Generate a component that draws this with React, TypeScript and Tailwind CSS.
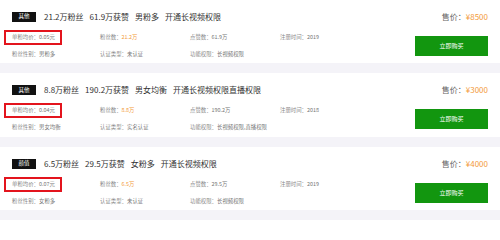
import React from "react";

interface Account {
  tag: string;
  title: string[];
  unitPrice: string;
  fans: string;
  likes: string;
  year: string;
  gender: string;
  auth: string;
  perms: string;
  price: string;
}

const accounts: Account[] = [
  {
    tag: "其他",
    title: ["21.2万粉丝", "61.9万获赞", "男粉多", "开通长视频权限"],
    unitPrice: "0.05元",
    fans: "21.2万",
    likes: "61.9万",
    year: "2019",
    gender: "男粉多",
    auth: "未认证",
    perms: "长视频权限",
    price: "¥8500",
  },
  {
    tag: "其他",
    title: ["8.8万粉丝", "190.2万获赞", "男女均衡", "开通长视频权限直播权限"],
    unitPrice: "0.04元",
    fans: "8.8万",
    likes: "190.2万",
    year: "2018",
    gender: "男女均衡",
    auth: "实名认证",
    perms: "长视频权限,直播权限",
    price: "¥3000",
  },
  {
    tag: "颜值",
    title: ["6.5万粉丝", "29.5万获赞", "女粉多", "开通长视频权限"],
    unitPrice: "0.07元",
    fans: "6.5万",
    likes: "29.5万",
    year: "2019",
    gender: "女粉多",
    auth: "未认证",
    perms: "长视频权限",
    price: "¥4000",
  },
];

function Field({ label, value, orange }: { label: string; value: string; orange?: boolean }) {
  return (
    <div className="whitespace-nowrap text-[#888]">
      {label}：<span className={orange ? "text-[#f39a3a]" : "text-[#777]"}>{value}</span>
    </div>
  );
}

function AccountCard({ a }: { a: Account }) {
  return (
    <div className="relative flex h-[67px] justify-between bg-white pl-[12px] pr-[12px] pt-[12px]">
      <div className="flex flex-col">
        {/* tag + headline */}
        <div className="flex h-[10px] items-center">
          <div className="flex h-[10px] w-[24px] items-center justify-center bg-[#111] text-[5.5px] leading-none text-white">
            {a.tag}
          </div>
          <div className="ml-[8px] flex gap-[6px] whitespace-nowrap text-[8px] leading-none text-[#333]">
            {a.title.map((t, i) => (
              <span key={i}>{t}</span>
            ))}
          </div>
        </div>

        {/* details */}
        <div className="mt-[11px] grid grid-cols-[88px_90px_90px_auto] gap-y-[9px] text-[5.4px] leading-[8px]">
          <Field label="单粉均价" value={a.unitPrice} />
          <Field label="粉丝数" value={a.fans} orange />
          <Field label="点赞数" value={a.likes} />
          <Field label="注册时间" value={a.year} />
          <Field label="粉丝性别" value={a.gender} />
          <Field label="认证类型" value={a.auth} />
          <Field label="功能权限" value={a.perms} />
        </div>
      </div>

      <div className="flex flex-col items-end">
        <div className="flex h-[10px] items-center whitespace-nowrap text-[8px] leading-none">
          <span className="text-[#666]">售价：</span>
          <span className="text-[#f39a3a]">{a.price}</span>
        </div>
        <button className="mt-[14px] flex h-[20px] w-[73px] items-center justify-center bg-[#12960f] text-[6px] leading-none text-white">
          立即购买
        </button>
      </div>

      {/* red annotation box */}
      <div className="absolute left-[4px] top-[30px] h-[15px] w-[58px] border-2 border-[#e3141d]" />
    </div>
  );
}

export default function App() {
  return (
    <div
      className="flex h-[240px] w-[500px] flex-col gap-[10px] overflow-hidden bg-[#f4f3f8]"
      style={{ fontFamily: '"Noto Sans CJK SC", "Noto Sans", sans-serif' }}
    >
      {accounts.map((a, i) => (
        <AccountCard key={i} a={a} />
      ))}
      <div className="h-[20px] shrink-0 bg-white" />
    </div>
  );
}
